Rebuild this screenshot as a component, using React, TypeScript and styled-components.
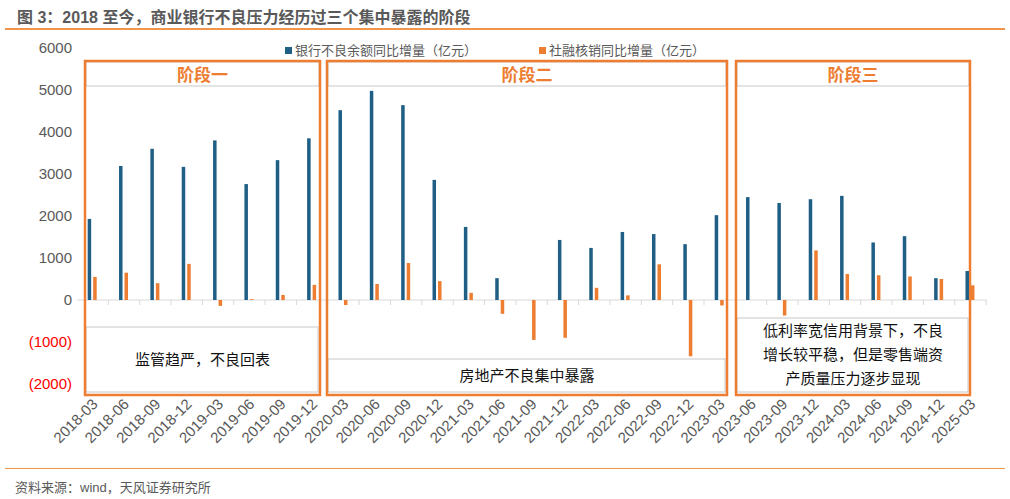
import React from "react";
import styled, { createGlobalStyle } from "styled-components";

const Global = createGlobalStyle`
  html, body { margin: 0; padding: 0; background: #fff; }
  body { font-family: "Liberation Sans", "Noto Sans CJK SC", sans-serif; }
`;

const Page = styled.div`
  width: 1010px;
  height: 499px;
  display: flex;
  flex-direction: column;
`;
const Title = styled.div`
  margin: 0 5px;
  height: 30px;
  border-bottom: 2px solid #f0954c;
  box-sizing: border-box;
  padding: 4px 0 0 12px;
  font-size: 16px;
  font-weight: bold;
  color: #595959;
`;
const Chart = styled.svg`
  display: block;
  width: 1010px;
  height: 438px;
  font-family: "Liberation Sans", "Noto Sans CJK SC", sans-serif;
`;
const Source = styled.div`
  margin: 0 5px;
  border-top: 1.5px solid #f0954c;
  padding: 8px 0 0 10px;
  font-size: 13px;
  color: #595959;
`;

const labels = [
  "2018-03","2018-06","2018-09","2018-12","2019-03","2019-06","2019-09","2019-12",
  "2020-03","2020-06","2020-09","2020-12","2021-03","2021-06","2021-09","2021-12",
  "2022-03","2022-06","2022-09","2022-12","2023-03","2023-06","2023-09","2023-12",
  "2024-03","2024-06","2024-09","2024-12","2025-03",
];
const blue = [1930,3190,3600,3170,3800,2760,3330,3850,4520,4980,4640,2860,1740,520,0,1430,1240,1620,1570,1330,2020,2450,2310,2400,2480,1370,1520,520,690];
const orange = [550,650,400,860,-140,20,120,360,-120,380,880,450,170,-330,-950,-900,290,110,850,-1340,-130,0,-370,1180,620,590,560,500,350];

const OY = 32;
const Z = 302 - OY;
const K = 0.042;
const X0 = 77;
const STEP = 31.35;

const Stage = ({ x, w, title, lines, boxTop }: { x: number; w: number; title: string; lines: string[]; boxTop: number }) => {
  const top = 63 - OY, bottom = 397 - OY;
  const bt = boxTop - OY;
  const midY = (bt + 394 - OY) / 2;
  const lh = 24;
  return (
    <g>
      <rect x={x + 1} y={top + 1} width={w - 2} height={24} fill="#fff" stroke="#c8c8c8" />
      <text x={x + w / 2} y={top + 20} textAnchor="middle" fontSize="17" fontWeight="bold" fill="#ed7d31">{title}</text>
      <rect x={x + 1} y={bt} width={w - 3} height={394 - OY - bt} fill="#fff" stroke="#c8c8c8" />
      {lines.map((l, i) => (
        <text key={i} x={x + w / 2} y={midY + 5 + (i - (lines.length - 1) / 2) * lh} textAnchor="middle" fontSize="15" fill="#111">{l}</text>
      ))}
      <rect x={x} y={top} width={w} height={bottom - top} fill="none" stroke="#ed7d31" strokeWidth="2.5" />
    </g>
  );
};

export default function App() {
  const ticks = [6000, 5000, 4000, 3000, 2000, 1000, 0, -1000, -2000];
  return (
    <Page>
      <Global />
      <Title>图 3：2018 至今，商业银行不良压力经历过三个集中暴露的阶段</Title>
      <Chart viewBox="0 0 1010 438">
        {ticks.map((t) => (
          <text key={t} x={72} y={Z - t * K + 5} textAnchor="end" fontSize="15" fill={t < 0 ? "#ff0000" : "#595959"}>
            {t < 0 ? `(${-t})` : t}
          </text>
        ))}
        <line x1={X0} x2={X0 + STEP * 29} y1={Z} y2={Z} stroke="#d9d9d9" />
        {labels.map((_, i) => (
          <line key={i} x1={X0 + STEP * (i + 1)} x2={X0 + STEP * (i + 1)} y1={Z} y2={Z + 5} stroke="#d9d9d9" />
        ))}
        <Stage x={85} w={235} title="阶段一" lines={["监管趋严，不良回表"]} boxTop={329} />
        <Stage x={327} w={400} title="阶段二" lines={["房地产不良集中暴露"]} boxTop={361} />
        <Stage x={736} w={234} title="阶段三" lines={["低利率宽信用背景下，不良", "增长长较平稳，但是零售端资", "产质量压力逐步显现"].map((s, i) => i === 1 ? "增长长较平稳，但是零售端资".replace("长长", "长") : s)} boxTop={320} />
        {labels.map((_, i) => {
          const cx = X0 + STEP * i + STEP / 2;
          const b = blue[i], o = orange[i];
          return (
            <g key={i}>
              {b !== 0 && <rect x={cx - 5} y={Z - b * K} width={3.5} height={b * K} fill="#1f5f86" />}
              {o !== 0 && <rect x={cx + 0.5} y={o > 0 ? Z - o * K : Z} width={3.5} height={Math.abs(o) * K} fill="#ed7d31" />}
            </g>
          );
        })}
        <rect x={285} y={49 - OY} width={7} height={7} fill="#1f5f86" />
        <text x={295} y={57 - OY} fontSize="13" fill="#595959">银行不良余额同比增量（亿元）</text>
        <rect x={539} y={49 - OY} width={7} height={7} fill="#ed7d31" />
        <text x={549} y={57 - OY} fontSize="13" fill="#595959">社融核销同比增量（亿元）</text>
        {labels.map((l, i) => {
          const cx = X0 + STEP * i + STEP / 2 + 6;
          const y = 407 - OY;
          return (
            <text key={l} x={cx} y={y} textAnchor="end" fontSize="15" fill="#595959" transform={`rotate(-45 ${cx} ${y})`}>{l}</text>
          );
        })}
      </Chart>
      <Source>资料来源：wind，天风证券研究所</Source>
    </Page>
  );
}
